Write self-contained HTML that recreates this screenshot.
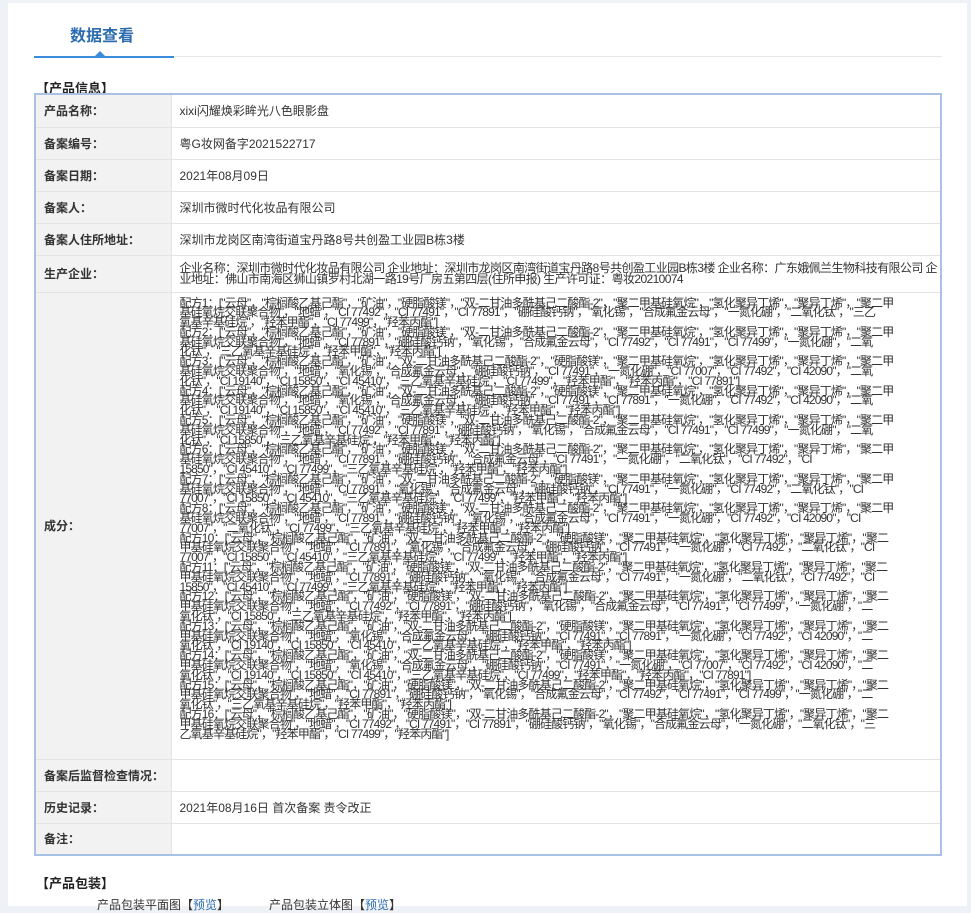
<!DOCTYPE html>
<html><head><meta charset="utf-8">
<style>
*{margin:0;padding:0;box-sizing:border-box}
body{width:971px;height:906px;overflow:hidden;background:#eef1f5;font-family:"Liberation Sans","Noto Sans CJK SC",sans-serif;color:#333;font-size:12px}
.panel{position:absolute;left:8px;top:3px;width:959px;height:903px;background:#fff}
.tab{position:absolute;left:70px;top:22px;font-size:16px;font-weight:bold;color:#2b6cb0}
.line{position:absolute;left:34px;top:56px;width:908px;height:1px;background:#e6e6e6}
.bline{position:absolute;left:34px;top:56px;width:140px;height:2px;background:#3b8bd9}
.tri{position:absolute;left:95px;top:51px;width:0;height:0;border-left:5px solid transparent;border-right:5px solid transparent;border-bottom:5px solid #3b8bd9}
.h{position:absolute;left:36px;font-weight:bold;font-size:13px;color:#222}
table{position:absolute;left:34px;top:93px;width:908px;border-collapse:collapse;border:2px solid #a9c1e4;table-layout:fixed}
td{border-bottom:1px solid #e3e3e3;vertical-align:middle;overflow:hidden}
td.l{background:#f2f2f2;font-weight:bold;padding-left:8px;border-right:1px solid #e3e3e3;font-size:12px;white-space:nowrap}
td.v{padding-left:8px}
.ing div{white-space:nowrap;line-height:9.8px;height:9.8px;font-size:12px;overflow:visible;letter-spacing:-0.85px}
.ing{padding:6px 0 6px 8px;vertical-align:top}
.p{line-height:11px;white-space:nowrap;letter-spacing:-0.6px}
</style></head><body>
<div class="panel"></div>
<div class="tab">数据查看</div>
<div class="line"></div><div class="bline"></div><div class="tri"></div>
<div class="h" style="top:78px">【产品信息】</div>
<table>
<colgroup><col style="width:136px"><col></colgroup>
<tr style="height:33px"><td class="l">产品名称：</td><td class="v">xixi闪耀焕彩眸光八色眼影盘</td></tr>
<tr style="height:32px"><td class="l">备案编号：</td><td class="v">粤G妆网备字2021522717</td></tr>
<tr style="height:32px"><td class="l">备案日期：</td><td class="v">2021年08月09日</td></tr>
<tr style="height:32px"><td class="l">备案人：</td><td class="v">深圳市微时代化妆品有限公司</td></tr>
<tr style="height:32px"><td class="l">备案人住所地址：</td><td class="v">深圳市龙岗区南湾街道宝丹路8号共创盈工业园B栋3楼</td></tr>
<tr style="height:37px"><td class="l">生产企业：</td><td class="v p">企业名称：深圳市微时代化妆品有限公司 企业地址：深圳市龙岗区南湾街道宝丹路8号共创盈工业园B栋3楼 企业名称：广东娥佩兰生物科技有限公司 企<br>业地址：佛山市南海区狮山镇罗村北湖一路19号厂房五第四层(住所申报) 生产许可证：粤妆20210074</td></tr>
<tr style="height:467px"><td class="l">成分：</td><td class="ing">
<div>配方1：["云母"，"棕榈酸乙基己酯"，"矿油"，"硬脂酸镁"，"双-二甘油多酰基己二酸酯-2"，"聚二甲基硅氧烷"，"氢化聚异丁烯"，"聚异丁烯"，"聚二甲</div>
<div>基硅氧烷交联聚合物"，"地蜡"，"CI 77492"，"CI 77491"，"CI 77891"，"硼硅酸钙钠"，"氧化锡"，"合成氟金云母"，"一氮化硼"，"二氧化钛"，"三乙</div>
<div>氧基辛基硅烷"，"羟苯甲酯"，"CI 77499"，"羟苯丙酯"]</div>
<div>配方2：["云母"，"棕榈酸乙基己酯"，"矿油"，"硬脂酸镁"，"双-二甘油多酰基己二酸酯-2"，"聚二甲基硅氧烷"，"氢化聚异丁烯"，"聚异丁烯"，"聚二甲</div>
<div>基硅氧烷交联聚合物"，"地蜡"，"CI 77891"，"硼硅酸钙钠"，"氧化锡"，"合成氟金云母"，"CI 77492"，"CI 77491"，"CI 77499"，"一氮化硼"，"二氧</div>
<div>化钛"，"三乙氧基辛基硅烷"，"羟苯甲酯"，"羟苯丙酯"]</div>
<div>配方3：["云母"，"棕榈酸乙基己酯"，"矿油"，"双-二甘油多酰基己二酸酯-2"，"硬脂酸镁"，"聚二甲基硅氧烷"，"氢化聚异丁烯"，"聚异丁烯"，"聚二甲</div>
<div>基硅氧烷交联聚合物"，"地蜡"，"氧化锡"，"合成氟金云母"，"硼硅酸钙钠"，"CI 77491"，"一氮化硼"，"CI 77007"，"CI 77492"，"CI 42090"，"二氧</div>
<div>化钛"，"CI 19140"，"CI 15850"，"CI 45410"，"三乙氧基辛基硅烷"，"CI 77499"，"羟苯甲酯"，"羟苯丙酯"，"CI 77891"]</div>
<div>配方4：["云母"，"棕榈酸乙基己酯"，"矿油"，"双-二甘油多酰基己二酸酯-2"，"硬脂酸镁"，"聚二甲基硅氧烷"，"氢化聚异丁烯"，"聚异丁烯"，"聚二甲</div>
<div>基硅氧烷交联聚合物"，"地蜡"，"氧化锡"，"合成氟金云母"，"硼硅酸钙钠"，"CI 77491"，"CI 77891"，"一氮化硼"，"CI 77492"，"CI 42090"，"二氧</div>
<div>化钛"，"CI 19140"，"CI 15850"，"CI 45410"，"三乙氧基辛基硅烷"，"羟苯甲酯"，"羟苯丙酯"]</div>
<div>配方5：["云母"，"棕榈酸乙基己酯"，"矿油"，"硬脂酸镁"，"双-二甘油多酰基己二酸酯-2"，"聚二甲基硅氧烷"，"氢化聚异丁烯"，"聚异丁烯"，"聚二甲</div>
<div>基硅氧烷交联聚合物"，"地蜡"，"CI 77492"，"CI 77891"，"硼硅酸钙钠"，"氧化锡"，"合成氟金云母"，"CI 77491"，"CI 77499"，"一氮化硼"，"二氧</div>
<div>化钛"，"CI 15850"，"三乙氧基辛基硅烷"，"羟苯甲酯"，"羟苯丙酯"]</div>
<div>配方6：["云母"，"棕榈酸乙基己酯"，"矿油"，"硬脂酸镁"，"双-二甘油多酰基己二酸酯-2"，"聚二甲基硅氧烷"，"氢化聚异丁烯"，"聚异丁烯"，"聚二甲</div>
<div>基硅氧烷交联聚合物"，"地蜡"，"CI 77891"，"硼硅酸钙钠"，"合成氟金云母"，"CI 77491"，"一氮化硼"，"二氧化钛"，"CI 77492"，"CI</div>
<div>15850"，"CI 45410"，"CI 77499"，"三乙氧基辛基硅烷"，"羟苯甲酯"，"羟苯丙酯"]</div>
<div>配方7：["云母"，"棕榈酸乙基己酯"，"矿油"，"双-二甘油多酰基己二酸酯-2"，"硬脂酸镁"，"聚二甲基硅氧烷"，"氢化聚异丁烯"，"聚异丁烯"，"聚二甲</div>
<div>基硅氧烷交联聚合物"，"地蜡"，"CI 77891"，"氧化锡"，"合成氟金云母"，"硼硅酸钙钠"，"CI 77491"，"一氮化硼"，"CI 77492"，"二氧化钛"，"CI</div>
<div>77007"，"CI 15850"，"CI 45410"，"三乙氧基辛基硅烷"，"CI 77499"，"羟苯甲酯"，"羟苯丙酯"]</div>
<div>配方8：["云母"，"棕榈酸乙基己酯"，"矿油"，"硬脂酸镁"，"双-二甘油多酰基己二酸酯-2"，"聚二甲基硅氧烷"，"氢化聚异丁烯"，"聚异丁烯"，"聚二甲</div>
<div>基硅氧烷交联聚合物"，"地蜡"，"CI 77891"，"硼硅酸钙钠"，"氧化锡"，"合成氟金云母"，"CI 77491"，"一氮化硼"，"CI 77492"，"CI 42090"，"CI</div>
<div>77007"，"二氧化钛"，"CI 77499"，"三乙氧基辛基硅烷"，"羟苯甲酯"，"羟苯丙酯"]</div>
<div>配方10：["云母"，"棕榈酸乙基己酯"，"矿油"，"双-二甘油多酰基己二酸酯-2"，"硬脂酸镁"，"聚二甲基硅氧烷"，"氢化聚异丁烯"，"聚异丁烯"，"聚二</div>
<div>甲基硅氧烷交联聚合物"，"地蜡"，"CI 77891"，"氧化锡"，"合成氟金云母"，"硼硅酸钙钠"，"CI 77491"，"一氮化硼"，"CI 77492"，"二氧化钛"，"CI</div>
<div>77007"，"CI 15850"，"CI 45410"，"三乙氧基辛基硅烷"，"CI 77499"，"羟苯甲酯"，"羟苯丙酯"]</div>
<div>配方11：["云母"，"棕榈酸乙基己酯"，"矿油"，"硬脂酸镁"，"双-二甘油多酰基己二酸酯-2"，"聚二甲基硅氧烷"，"氢化聚异丁烯"，"聚异丁烯"，"聚二</div>
<div>甲基硅氧烷交联聚合物"，"地蜡"，"CI 77891"，"硼硅酸钙钠"，"氧化锡"，"合成氟金云母"，"CI 77491"，"一氮化硼"，"二氧化钛"，"CI 77492"，"CI</div>
<div>15850"，"CI 45410"，"CI 77499"，"三乙氧基辛基硅烷"，"羟苯甲酯"，"羟苯丙酯"]</div>
<div>配方12：["云母"，"棕榈酸乙基己酯"，"矿油"，"硬脂酸镁"，"双-二甘油多酰基己二酸酯-2"，"聚二甲基硅氧烷"，"氢化聚异丁烯"，"聚异丁烯"，"聚二</div>
<div>甲基硅氧烷交联聚合物"，"地蜡"，"CI 77492"，"CI 77891"，"硼硅酸钙钠"，"氧化锡"，"合成氟金云母"，"CI 77491"，"CI 77499"，"一氮化硼"，"二</div>
<div>氧化钛"，"CI 15850"，"三乙氧基辛基硅烷"，"羟苯甲酯"，"羟苯丙酯"]</div>
<div>配方13：["云母"，"棕榈酸乙基己酯"，"矿油"，"双-二甘油多酰基己二酸酯-2"，"硬脂酸镁"，"聚二甲基硅氧烷"，"氢化聚异丁烯"，"聚异丁烯"，"聚二</div>
<div>甲基硅氧烷交联聚合物"，"地蜡"，"氧化锡"，"合成氟金云母"，"硼硅酸钙钠"，"CI 77491"，"CI 77891"，"一氮化硼"，"CI 77492"，"CI 42090"，"二</div>
<div>氧化钛"，"CI 19140"，"CI 15850"，"CI 45410"，"三乙氧基辛基硅烷"，"羟苯甲酯"，"羟苯丙酯"]</div>
<div>配方14：["云母"，"棕榈酸乙基己酯"，"矿油"，"双-二甘油多酰基己二酸酯-2"，"硬脂酸镁"，"聚二甲基硅氧烷"，"氢化聚异丁烯"，"聚异丁烯"，"聚二</div>
<div>甲基硅氧烷交联聚合物"，"地蜡"，"氧化锡"，"合成氟金云母"，"硼硅酸钙钠"，"CI 77491"，"一氮化硼"，"CI 77007"，"CI 77492"，"CI 42090"，"二</div>
<div>氧化钛"，"CI 19140"，"CI 15850"，"CI 45410"，"三乙氧基辛基硅烷"，"CI 77499"，"羟苯甲酯"，"羟苯丙酯"，"CI 77891"]</div>
<div>配方15：["云母"，"棕榈酸乙基己酯"，"矿油"，"硬脂酸镁"，"双-二甘油多酰基己二酸酯-2"，"聚二甲基硅氧烷"，"氢化聚异丁烯"，"聚异丁烯"，"聚二</div>
<div>甲基硅氧烷交联聚合物"，"地蜡"，"CI 77891"，"硼硅酸钙钠"，"氧化锡"，"合成氟金云母"，"CI 77492"，"CI 77491"，"CI 77499"，"一氮化硼"，"二</div>
<div>氧化钛"，"三乙氧基辛基硅烷"，"羟苯甲酯"，"羟苯丙酯"]</div>
<div>配方16：["云母"，"棕榈酸乙基己酯"，"矿油"，"硬脂酸镁"，"双-二甘油多酰基己二酸酯-2"，"聚二甲基硅氧烷"，"氢化聚异丁烯"，"聚异丁烯"，"聚二</div>
<div>甲基硅氧烷交联聚合物"，"地蜡"，"CI 77492"，"CI 77491"，"CI 77891"，"硼硅酸钙钠"，"氧化锡"，"合成氟金云母"，"一氮化硼"，"二氧化钛"，"三</div>
<div>乙氧基辛基硅烷"，"羟苯甲酯"，"CI 77499"，"羟苯丙酯"]</div>
</td></tr>
<tr style="height:32px"><td class="l">备案后监督检查情况：</td><td class="v"></td></tr>
<tr style="height:32px"><td class="l">历史记录：</td><td class="v">2021年08月16日 首次备案 责令改正</td></tr>
<tr style="height:32px"><td class="l">备注：</td><td class="v"></td></tr>
</table>
<div class="h" style="top:873px">【产品包装】</div>
<div style="position:absolute;left:97px;top:896px;font-size:12px">产品包装平面图【<span style="color:#2b6cb0">预览</span>】&nbsp;&nbsp;&nbsp;&nbsp;&nbsp;&nbsp;&nbsp;&nbsp;&nbsp;&nbsp;&nbsp;&nbsp;产品包装立体图【<span style="color:#2b6cb0">预览</span>】</div>
</body></html>
